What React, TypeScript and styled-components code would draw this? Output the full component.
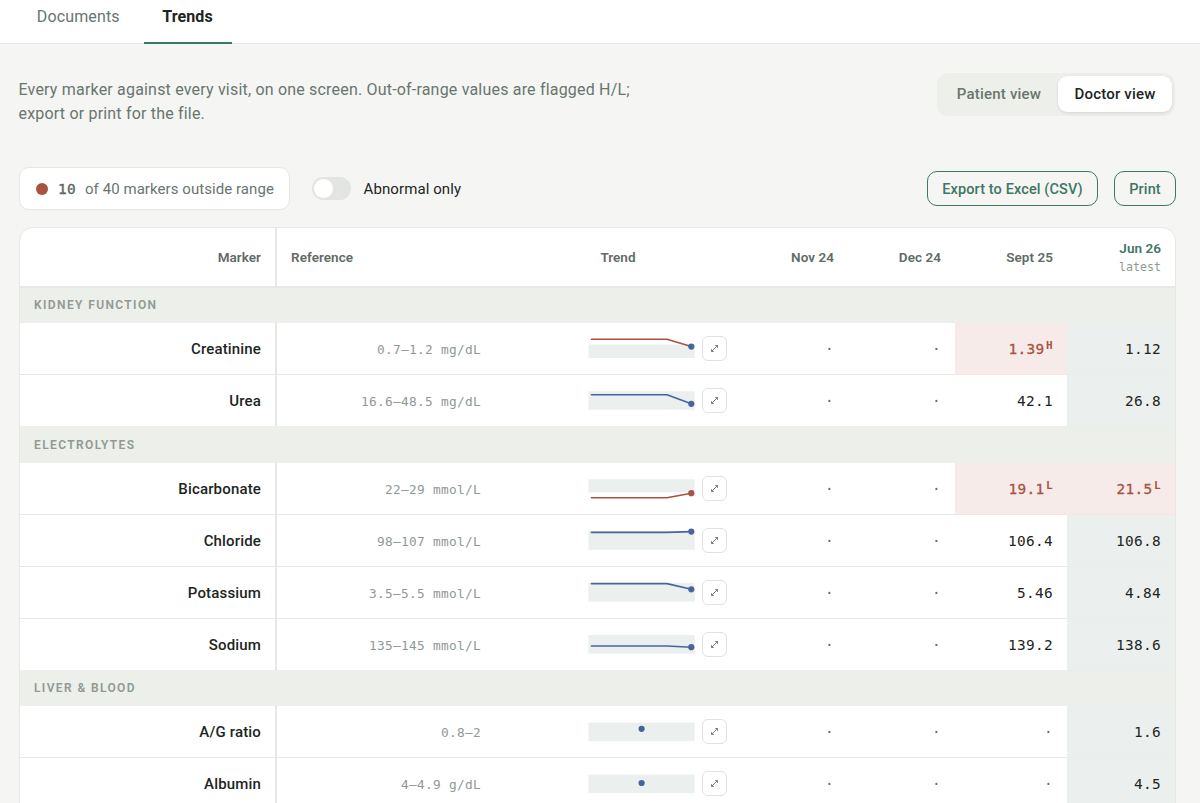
import React from "react";
import styled, { createGlobalStyle, css } from "styled-components";

const sans = `Roboto, "Liberation Sans", sans-serif`;
const mono = `"DejaVu Sans Mono", "Liberation Mono", monospace`;

const color = {
  page: "#f5f5f3",
  ink: "#1d2523",
  body: "#69756f",
  head: "#5f6b66",
  muted: "#909995",
  line: "#e6e8e5",
  band: "#edefea",
  tint: "#ebf0ee",
  green: "#3f7665",
  red: "#a9523f",
  redTint: "#f6ebe8",
  blue: "#4664a0",
};

const GlobalStyle = createGlobalStyle`
  * { box-sizing: border-box; }
  body {
    margin: 0;
    height: 803px;
    overflow: hidden;
    background: ${color.page};
    color: ${color.ink};
    font-family: ${sans};
  }
  button { font-family: inherit; background: none; border: 0; padding: 0; margin: 0; }
`;

const Page = styled.div`
  width: 1200px;
  height: 803px;
  overflow: hidden;
`;

const Tabs = styled.nav`
  display: flex;
  height: 44px;
  padding-left: 13px;
  gap: 0;
  background: #fff;
  border-bottom: 1px solid ${color.line};
`;

const Tab = styled.button<{ $active?: boolean }>`
  width: ${(p) => (p.$active ? 88 : 130.5)}px;
  height: 44px;
  padding-bottom: 11px;
  font-size: 16px;
  line-height: 33px;
  white-space: nowrap;
  color: ${color.body};
  letter-spacing: 0.14px;
  ${(p) =>
    p.$active &&
    css`
      color: ${color.ink};
      font-weight: 700;
      letter-spacing: 0.1px;
      border-bottom: 2px solid ${color.green};
      padding-bottom: 9px;
    `}
`;

const Main = styled.main`
  width: 1157px;
  margin-left: 19px;
`;

const Intro = styled.header`
  display: flex;
  justify-content: space-between;
  align-items: flex-start;
  padding-top: 29px;
  height: 123px;
`;

const Lead = styled.p`
  margin: 5px 0 0 -0.5px;
  width: 640px;
  font-size: 16px;
  line-height: 24px;
  letter-spacing: 0.19px;
  color: ${color.body};
`;

const Segmented = styled.div`
  display: flex;
  width: 238px;
  height: 43px;
  margin-right: 1px;
  padding: 3px;
  border-radius: 11px;
  background: ${color.band};
`;

const Segment = styled.button<{ $active?: boolean }>`
  width: ${(p) => (p.$active ? 114 : 118)}px;
  height: 36px;
  border-radius: 9px;
  font-size: 15px;
  font-weight: 500;
  letter-spacing: 0.2px;
  color: ${(p) => (p.$active ? color.ink : color.body)};
  background: ${(p) => (p.$active ? "#fff" : "transparent")};
  box-shadow: ${(p) => (p.$active ? "0 1px 3px rgba(30, 40, 35, 0.12)" : "none")};
`;

const Toolbar = styled.div`
  display: flex;
  align-items: center;
  height: 43px;
  margin-bottom: 17px;
`;

const Summary = styled.div`
  display: flex;
  align-items: center;
  width: 271px;
  height: 43px;
  padding-left: 16px;
  border: 1px solid ${color.line};
  border-radius: 10px;
  background: #fff;
  font-size: 15px;
  letter-spacing: 0.06px;
  white-space: nowrap;
  color: ${color.body};
`;

const Dot = styled.span`
  width: 12px;
  height: 12px;
  margin-right: 10px;
  border-radius: 50%;
  background: ${color.red};
`;

const Count = styled.b`
  margin-right: 9px;
  font: 400 14.4px ${mono};
  -webkit-text-stroke: 0.4px currentColor;
  letter-spacing: 0.33px;
  color: ${color.head};
`;

const Switch = styled.span`
  width: 39px;
  height: 23px;
  margin: 0 13px 0 21.5px;
  padding: 2px;
  border-radius: 12px;
  background: #e2e5e1;

  &::before {
    content: "";
    display: block;
    width: 19px;
    height: 19px;
    border-radius: 50%;
    background: #fff;
  }
`;

const SwitchLabel = styled.span`
  font-size: 15px;
  letter-spacing: 0.1px;
`;

const Action = styled.button<{ $width: number }>`
  width: ${(p) => p.$width}px;
  height: 35px;
  margin-left: 16px;
  padding-top: 1px;
  border: 1px solid ${color.green};
  border-radius: 10px;
  font-size: 14.5px;
  font-weight: 500;
  letter-spacing: 0.12px;
  white-space: nowrap;
  color: ${color.green};
`;

const Spacer = styled.span`
  flex: 1;
`;

const Card = styled.section`
  height: 700px;
  overflow: hidden;
  border: 1px solid ${color.line};
  border-radius: 14px;
  background: #fff;
`;

const columns = css`
  display: grid;
  grid-template-columns: 257px 218px 246px 107px 107px 112px 108px;
`;

const HeadRow = styled.div`
  ${columns}
  height: 60px;
  border-bottom: 2px solid ${color.line};
`;

type Align = "left" | "center" | "right";

const HeadCell = styled.div<{ $align?: Align; $ruled?: boolean; $latest?: boolean }>`
  display: flex;
  flex-direction: column;
  justify-content: center;
  padding: 0 14px;
  text-align: ${(p) => p.$align ?? "right"};
  font-size: 13.5px;
  font-weight: 600;
  line-height: 18px;
  letter-spacing: 0.05px;
  color: ${(p) => (p.$latest ? color.green : color.head)};
  border-right: ${(p) => (p.$ruled ? `2px solid ${color.line}` : "0")};
`;

const Latest = styled.small`
  padding-top: 1px;
  margin-bottom: -1px;
  font: 400 11.6px/18px ${mono};
  letter-spacing: 0;
  color: ${color.muted};
`;

const GroupTitle = styled.h3<{ $height: number }>`
  margin: 0;
  height: ${(p) => p.$height}px;
  padding-left: 14px;
  background: ${color.band};
  font-size: 12px;
  font-weight: 600;
  line-height: ${(p) => p.$height}px;
  letter-spacing: 1.38px;
  text-transform: uppercase;
  color: ${color.muted};
`;

const Row = styled.div`
  ${columns}
  height: 52px;
`;

const Cell = styled.div<{ $last?: boolean }>`
  display: flex;
  align-items: center;
  justify-content: flex-end;
  padding: 0 14px;
  border-bottom: 1px solid ${(p) => (p.$last ? color.band : color.line)};
`;

const Marker = styled(Cell)`
  font-size: 15px;
  font-weight: 500;
  letter-spacing: 0.16px;
  border-right: 2px solid ${color.line};
`;

const Reference = styled(Cell)`
  padding-top: 1px;
  font: 400 12.8px ${mono};
  letter-spacing: 0.3px;
  white-space: nowrap;
  color: ${color.muted};
`;

const Trend = styled(Cell)`
  gap: 7px;
`;

const Spark = styled.svg`
  display: block;
  width: 107px;
  height: 36px;
`;

const Expand = styled.button`
  display: grid;
  place-items: center;
  width: 25px;
  height: 25px;
  border: 1px solid #dfe2df;
  border-radius: 6px;
  background: #fff;
  color: ${color.head};
`;

const Value = styled(Cell)<{ $tone?: "alert" | "latest"; $empty?: boolean }>`
  padding-top: 1px;
  font: 400 14.4px ${mono};
  letter-spacing: 0.33px;
  color: ${(p) => (p.$empty ? color.head : color.ink)};
  ${(p) => p.$tone === "latest" && `background: ${color.tint}; border-bottom-color: #e8eeeb;`}
  ${(p) =>
    p.$tone === "alert" &&
    css`
      background: ${color.redTint};
      border-bottom-color: #f2e7e4;
      color: ${color.red};
      -webkit-text-stroke: 0.3px ${color.red};
    `}
`;

const Flag = styled.sup`
  margin: -8px 0 0 1.5px;
  font: 700 11px/11px ${mono};
  -webkit-text-stroke: 0;
`;

interface Series {
  band: [number, number];
  start?: number;
  end: number;
  line?: string;
  dot?: string;
}

interface MarkerRow {
  name: string;
  reference: string;
  series: Series;
  sept: string;
  septFlag?: string;
  june: string;
  juneFlag?: string;
}

const groups: { title: string; height: number; rows: MarkerRow[] }[] = [
  {
    title: "Kidney function",
    height: 35,
    rows: [
      { name: "Creatinine", reference: "0.7–1.2 mg/dL", series: { band: [13.4, 13.6], start: 8.2, end: 15.6, line: color.red }, sept: "1.39", septFlag: "H", june: "1.12" },
      { name: "Urea", reference: "16.6–48.5 mg/dL", series: { band: [8.2, 18.6], start: 11.8, end: 20.8 }, sept: "42.1", june: "26.8" },
    ],
  },
  {
    title: "Electrolytes",
    height: 36,
    rows: [
      { name: "Bicarbonate", reference: "22–29 mmol/L", series: { band: [8.2, 13.2], start: 26.7, end: 22.2, line: color.red, dot: color.red }, sept: "19.1", septFlag: "L", june: "21.5", juneFlag: "L" },
      { name: "Chloride", reference: "98–107 mmol/L", series: { band: [8.2, 18.6], start: 9.4, end: 8.6 }, sept: "106.4", june: "106.8" },
      { name: "Potassium", reference: "3.5–5.5 mmol/L", series: { band: [8, 18.6], start: 8.6, end: 14.3 }, sept: "5.46", june: "4.84" },
      { name: "Sodium", reference: "135–145 mmol/L", series: { band: [8, 18.6], start: 19, end: 20.2 }, sept: "139.2", june: "138.6" },
    ],
  },
  {
    title: "Liver & blood",
    height: 35,
    rows: [
      { name: "A/G ratio", reference: "0.8–2", series: { band: [8.6, 18.6], end: 14.8 }, sept: "", june: "1.6" },
      { name: "Albumin", reference: "4–4.9 g/dL", series: { band: [8.6, 18.6], end: 17 }, sept: "", june: "4.5" },
    ],
  },
];

function Sparkline({ band, start, end, line = color.blue, dot = color.blue }: Series) {
  const single = start === undefined;
  return (
    <Spark viewBox="0 0 107 36">
      <rect x="0.4" y={band[0]} width="106.4" height={band[1]} fill={color.tint} />
      {!single && (
        <polyline
          points={`3.4,${start} 79,${start} 103.3,${end}`}
          fill="none"
          stroke={line}
          strokeWidth="1.6"
          strokeLinecap="round"
          strokeLinejoin="round"
        />
      )}
      <circle cx={single ? 53.6 : 103.3} cy={end} r="3.1" fill={dot} />
    </Spark>
  );
}

function ExpandIcon() {
  return (
    <svg width="9" height="9" viewBox="0 0 9 9" fill="none" stroke="currentColor" strokeWidth="0.85">
      <path d="M1.7 7.3 7.3 1.7M5.2 1.5h2.3v2.3M1.5 5.2v2.3h2.3" />
    </svg>
  );
}

function Reading({ value, flag, latest, last }: { value: string; flag?: string; latest?: boolean; last: boolean }) {
  return (
    <Value $tone={flag ? "alert" : latest ? "latest" : undefined} $empty={!value} $last={last}>
      {value || "·"}
      {flag && <Flag>{flag}</Flag>}
    </Value>
  );
}

export default function App() {
  return (
    <Page>
      <GlobalStyle />
      <Tabs>
        <Tab>Documents</Tab>
        <Tab $active>Trends</Tab>
      </Tabs>
      <Main>
        <Intro>
          <Lead>
            Every marker against every visit, on one screen. Out-of-range values are flagged H/L;
            <br />
            export or print for the file.
          </Lead>
          <Segmented>
            <Segment>Patient view</Segment>
            <Segment $active>Doctor view</Segment>
          </Segmented>
        </Intro>
        <Toolbar>
          <Summary>
            <Dot />
            <Count>10</Count>
            of 40 markers outside range
          </Summary>
          <Switch />
          <SwitchLabel>Abnormal only</SwitchLabel>
          <Spacer />
          <Action $width={171}>Export to Excel (CSV)</Action>
          <Action $width={62}>Print</Action>
        </Toolbar>
        <Card>
          <HeadRow>
            <HeadCell $ruled>Marker</HeadCell>
            <HeadCell $align="left">Reference</HeadCell>
            <HeadCell $align="center">Trend</HeadCell>
            <HeadCell>Nov 24</HeadCell>
            <HeadCell>Dec 24</HeadCell>
            <HeadCell>Sept 25</HeadCell>
            <HeadCell $latest>
              Jun 26
              <Latest>latest</Latest>
            </HeadCell>
          </HeadRow>
          {groups.map((group) => (
            <React.Fragment key={group.title}>
              <GroupTitle $height={group.height}>{group.title}</GroupTitle>
              {group.rows.map((row, i) => {
                const last = i === group.rows.length - 1;
                return (
                  <Row key={row.name}>
                    <Marker $last={last}>{row.name}</Marker>
                    <Reference $last={last}>{row.reference}</Reference>
                    <Trend $last={last}>
                      <Sparkline {...row.series} />
                      <Expand aria-label={`Expand ${row.name}`}>
                        <ExpandIcon />
                      </Expand>
                    </Trend>
                    <Reading value="" last={last} />
                    <Reading value="" last={last} />
                    <Reading value={row.sept} flag={row.septFlag} last={last} />
                    <Reading value={row.june} flag={row.juneFlag} latest last={last} />
                  </Row>
                );
              })}
            </React.Fragment>
          ))}
        </Card>
      </Main>
    </Page>
  );
}
